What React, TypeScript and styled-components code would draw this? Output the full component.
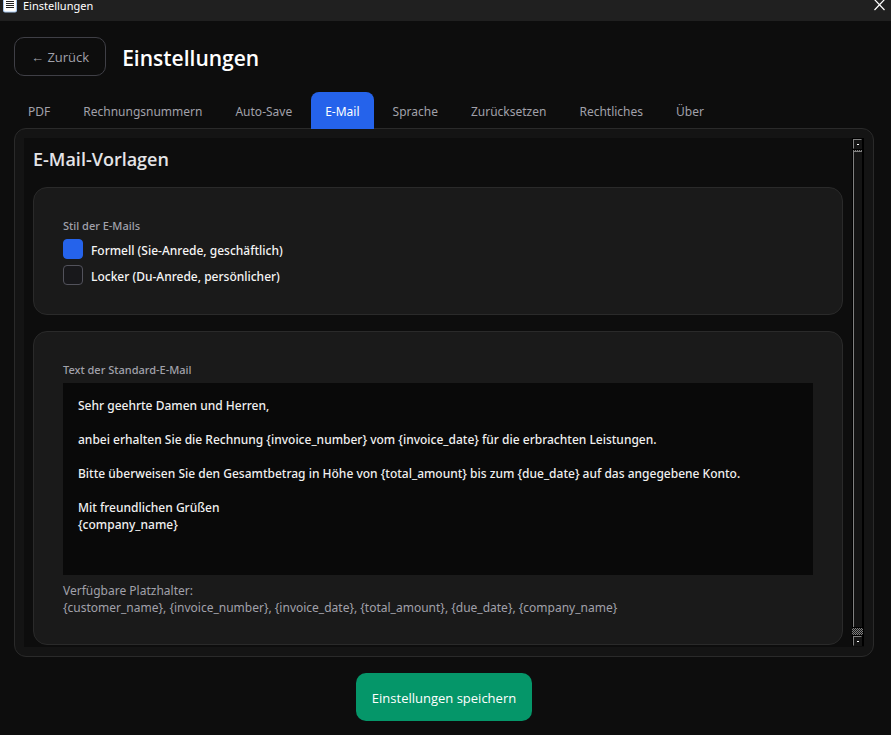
import React, { useState } from "react";
import styled, { createGlobalStyle } from "styled-components";

const GlobalStyle = createGlobalStyle`
  * { box-sizing: border-box; }
  html, body { margin: 0; background: #0d0d0d; }
  body, button, input, textarea { font-family: "Noto Sans", "Open Sans", sans-serif; }
`;

const headingFont = `"Open Sans", "Noto Sans", sans-serif`;

const Window = styled.div`
  display: flex;
  flex-direction: column;
  min-height: 100vh;
  background: #0d0d0d;
  color: #f5f5f5;
  font-size: 12px;
  line-height: 17px;
`;

const TitleBar = styled.div`
  display: flex;
  align-items: flex-start;
  gap: 6px;
  height: 21px;
  padding: 0 6px 0 3px;
  background: #202020;
  font-size: 11px;
  line-height: 12px;
`;

const TitleText = styled.span`
  flex: 1;
  color: #ffffff;
`;

const CloseButton = styled.button`
  display: flex;
  padding: 0;
  border: 0;
  background: none;
  color: #ffffff;
`;

const Page = styled.main`
  display: flex;
  flex: 1;
  flex-direction: column;
  padding: 16px 17px 14px 14px;
`;

const Header = styled.header`
  display: flex;
  align-items: center;
  gap: 16px;
  margin-bottom: 16px;
`;

const BackButton = styled.button`
  height: 39px;
  padding: 0 16px;
  border: 1px solid #3f3f46;
  border-radius: 10px;
  background: transparent;
  color: #a1a1aa;
  font-family: ${headingFont};
  font-size: 13px;
  font-weight: 500;
`;

const PageTitle = styled.h1`
  margin: 0;
  padding-top: 2px;
  color: #ffffff;
  font-family: ${headingFont};
  font-size: 21px;
  font-weight: 600;
  line-height: 30px;
`;

const Tabs = styled.div`
  position: relative;
  z-index: 1;
  display: flex;
  gap: 5px;
  margin-bottom: -1px;
`;

const Tab = styled.button<{ $active: boolean }>`
  height: 37px;
  padding: 2px 14px 0;
  border: 0;
  border-radius: 8px 8px 0 0;
  background: ${(p) => (p.$active ? "#2563eb" : "transparent")};
  color: ${(p) => (p.$active ? "#ffffff" : "#a1a1aa")};
  font-size: 12px;
  line-height: 17px;
  white-space: nowrap;
`;

const Panel = styled.section`
  display: flex;
  flex: 1;
  padding: 9px;
  border: 1px solid #2a2a2a;
  border-radius: 12px;
  background: #141414;
`;

const ScrollArea = styled.div`
  display: flex;
  flex: 1;
  gap: 9px;
  background: #0d0d0d;
`;

const Content = styled.div`
  display: flex;
  flex: 1;
  flex-direction: column;
  gap: 16px;
  padding: 10px 0 2px 9px;
`;

const SectionTitle = styled.h2`
  margin: 0;
  color: #e4e4e7;
  font-family: ${headingFont};
  font-size: 18px;
  font-weight: 600;
  line-height: 23px;
`;

const Card = styled.div`
  display: flex;
  flex-direction: column;
  padding: 29px 29px 28px;
  border: 1px solid #2a2a2a;
  border-radius: 14px;
  background: #1a1a1a;
`;

const Choices = styled.fieldset`
  display: flex;
  flex-direction: column;
  gap: 6px;
  margin: 0;
  padding: 0 0 1px;
  border: 0;
`;

const Legend = styled.legend`
  margin-bottom: 5px;
  padding: 0;
  color: #a1a1aa;
  font-size: 11px;
  font-weight: 500;
`;

const FieldLabel = styled.label`
  margin-bottom: 5px;
  color: #a1a1aa;
  font-size: 11px;
  font-weight: 500;
`;

const Choice = styled.label`
  display: flex;
  align-items: center;
  gap: 8px;
  height: 20px;
  font-weight: 500;
`;

const ChoiceText = styled.span`
  padding-top: 2px;
`;

const Radio = styled.input`
  appearance: none;
  width: 20px;
  height: 20px;
  margin: 0;
  border: 1px solid #52525b;
  border-radius: 4px;
  background: #18181b;
  &:checked {
    border-color: #2563eb;
    background: #2563eb;
  }
`;

const MailText = styled.textarea`
  display: block;
  width: 100%;
  height: 192px;
  padding: 14px 15px;
  border: 0;
  outline: 0;
  resize: none;
  background: #090909;
  color: #f0f0f0;
  font-size: 12px;
  font-weight: 500;
  line-height: 17px;
`;

const Hint = styled.p`
  margin: 7px 0 0;
  color: #a1a1aa;
`;

const ScrollBar = styled.div`
  display: flex;
  flex-direction: column;
  width: 12px;
  margin-bottom: 1px;
  padding: 1px 1px 0 0;
  background: #000000;
`;

const ScrollStep = styled.button`
  display: flex;
  align-items: center;
  justify-content: center;
  height: 10px;
  margin: 0 1px;
  padding: 0;
  border: 1px solid #808080;
  border-right-color: #141414;
  border-bottom-color: #141414;
  background: #141414;
`;

const StepMark = styled.span`
  width: 2px;
  height: 1px;
  background: #ffffff;
`;

const Ridge = styled.div`
  height: 1px;
  margin: 1px 1px 0;
  background: repeating-linear-gradient(90deg, #808080 0 1px, #141414 1px 2px);
`;

const Thumb = styled.div`
  flex: 1;
  margin: 0 1px;
  border-top: 1px solid #808080;
  border-left: 1px solid #808080;
  background: #141414;
`;

const Groove = styled.div`
  height: 7px;
  margin: 1px 0;
  background: repeating-conic-gradient(#808080 0 25%, #141414 0 50%) 0 0 / 2px 2px;
`;

const SaveButton = styled.button`
  align-self: center;
  height: 48px;
  margin-top: 16px;
  padding: 2px 16px 0;
  border: 0;
  border-radius: 10px;
  background: #059669;
  color: #ffffff;
  font-family: ${headingFont};
  font-size: 13px;
  font-weight: 500;
`;

const tabs = ["PDF", "Rechnungsnummern", "Auto-Save", "E-Mail", "Sprache", "Zurücksetzen", "Rechtliches", "Über"];

const styles = [
  { id: "formal", label: "Formell (Sie-Anrede, geschäftlich)" },
  { id: "casual", label: "Locker (Du-Anrede, persönlicher)" },
];

const defaultText = `Sehr geehrte Damen und Herren,

anbei erhalten Sie die Rechnung {invoice_number} vom {invoice_date} für die erbrachten Leistungen.

Bitte überweisen Sie den Gesamtbetrag in Höhe von {total_amount} bis zum {due_date} auf das angegebene Konto.

Mit freundlichen Grüßen
{company_name}`;

function DocumentIcon() {
  return (
    <svg width="14" height="13" viewBox="0 0 14 13" aria-hidden="true">
      <path d="M0 0h14v10.500a2 2 0 0 1-2 2H2a2 2 0 0 1-2-2z" fill="#a9c8ee" />
      <path d="M1 0h12v10a1.500 1.500 0 0 1-1.500 1.500h-9A1.500 1.500 0 0 1 1 10z" fill="#ffffff" />
      <path d="M3 1.500h8M3 3.500h8M3 5.500h8M3 7.500h8" stroke="#222222" strokeWidth="1" />
    </svg>
  );
}

function CloseIcon() {
  return (
    <svg width="11" height="11" viewBox="0 0 11 11" aria-hidden="true">
      <path d="M.5-.5l10 10.500M10.500-.5L.5 10" stroke="currentColor" strokeWidth="1.200" />
    </svg>
  );
}

export default function App() {
  const [tab, setTab] = useState("E-Mail");
  const [style, setStyle] = useState("formal");
  const [text, setText] = useState(defaultText);

  return (
    <Window>
      <GlobalStyle />
      <TitleBar>
        <DocumentIcon />
        <TitleText>Einstellungen</TitleText>
        <CloseButton type="button" aria-label="Schließen">
          <CloseIcon />
        </CloseButton>
      </TitleBar>
      <Page>
        <Header>
          <BackButton type="button">← Zurück</BackButton>
          <PageTitle>Einstellungen</PageTitle>
        </Header>
        <Tabs role="tablist">
          {tabs.map((name) => (
            <Tab
              key={name}
              type="button"
              role="tab"
              aria-selected={name === tab}
              $active={name === tab}
              onClick={() => setTab(name)}
            >
              {name}
            </Tab>
          ))}
        </Tabs>
        <Panel role="tabpanel">
          <ScrollArea>
            <Content>
              <SectionTitle>E-Mail-Vorlagen</SectionTitle>
              <Card>
                <Choices>
                  <Legend>Stil der E-Mails</Legend>
                  {styles.map((s) => (
                    <Choice key={s.id}>
                      <Radio
                        type="radio"
                        name="mail-style"
                        checked={style === s.id}
                        onChange={() => setStyle(s.id)}
                      />
                      <ChoiceText>{s.label}</ChoiceText>
                    </Choice>
                  ))}
                </Choices>
              </Card>
              <Card>
                <FieldLabel htmlFor="mail-text">Text der Standard-E-Mail</FieldLabel>
                <MailText
                  id="mail-text"
                  spellCheck={false}
                  value={text}
                  onChange={(e) => setText(e.target.value)}
                />
                <Hint>
                  Verfügbare Platzhalter:
                  <br />
                  {"{customer_name}, {invoice_number}, {invoice_date}, {total_amount}, {due_date}, {company_name}"}
                </Hint>
              </Card>
            </Content>
            <ScrollBar>
              <ScrollStep type="button" aria-label="Nach oben">
                <StepMark />
              </ScrollStep>
              <Ridge />
              <Thumb />
              <Groove />
              <ScrollStep type="button" aria-label="Nach unten">
                <StepMark />
              </ScrollStep>
            </ScrollBar>
          </ScrollArea>
        </Panel>
        <SaveButton type="button">Einstellungen speichern</SaveButton>
      </Page>
    </Window>
  );
}
